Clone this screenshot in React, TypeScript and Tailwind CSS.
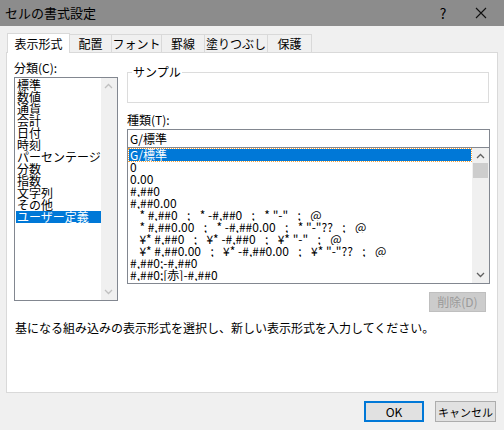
import React from "react";

const cats = ["標準","数値","通貨","会計","日付","時刻","パーセンテージ","分数","指数","文字列","その他","ユーザー定義"];
const types = ["G/標準","0","0.00","#,##0","#,##0.00",
"_ * #,##0_ ;_ * -#,##0_ ;_ * \"-\"_ ;_ @_",
"_ * #,##0.00_ ;_ * -#,##0.00_ ;_ * \"-\"??_ ;_ @_",
"_ ¥* #,##0_ ;_ ¥* -#,##0_ ;_ ¥* \"-\"_ ;_ @_",
"_ ¥* #,##0.00_ ;_ ¥* -#,##0.00_ ;_ ¥* \"-\"??_ ;_ @_",
"#,##0;-#,##0","#,##0;[赤]-#,##0"];

function Up(){return <svg width="9" height="6" viewBox="0 0 9 6"><path d="M1 5L4.5 1.5L8 5" stroke="currentColor" strokeWidth="1.3" fill="none"/></svg>}
function Down(){return <svg width="9" height="6" viewBox="0 0 9 6"><path d="M1 1L4.5 4.5L8 1" stroke="currentColor" strokeWidth="1.3" fill="none"/></svg>}

export default function App(){
  const tabs=[["表示形式",63],["配置",42],["フォント",50],["罫線",43],["塗りつぶし",63],["保護",44]] as const;
  return (
  <div className="w-[504px] h-[430px] bg-[#f0f0f0] flex flex-col text-[12px] leading-[14px] text-black" style={{fontFamily:'"Noto Sans CJK JP","Liberation Sans",sans-serif'}}>
    <div className="h-[26px] bg-[#8c8c8c] flex items-center pl-[5px] text-[13px]">
      <span className="flex-1">セルの書式設定</span>
      <span className="w-[30px] text-center text-[14px]">?</span>
      <span className="w-[46px] flex justify-center"><svg width="12" height="12" viewBox="0 0 12 12"><path d="M1 1L11 11M11 1L1 11" stroke="#111" strokeWidth="1.1"/></svg></span>
    </div>
    <div className="flex pl-[7px] pt-[7px] h-[26px] items-end">
      {tabs.map(([t,w],i)=>(
        <div key={t} style={{width:w}} className={i===0?"h-[20px] mb-[-1px] bg-white border border-b-0 border-[#d9d9d9] flex items-center justify-center relative z-10 whitespace-nowrap":"h-[18px] border border-b-0 border-l-0 border-[#d9d9d9] bg-[#f0f0f0] flex items-center justify-center whitespace-nowrap"}>{t}</div>
      ))}
    </div>
    <div className="mx-[6px] h-[341px] bg-white border border-[#d9d9d9] relative px-[7px] pt-[8px]">
      <div className="flex gap-[9px]">
        <div className="w-[104px]">
          <div className="mb-[2px]">分類(C):</div>
          <div className="h-[224px] border border-[#828790] flex">
            <div className="flex-1 pt-[1px] pl-[1px]">
              {cats.map((c,i)=><div key={c} className={"h-[12px] leading-[12px] overflow-hidden whitespace-nowrap pl-[1px] "+(i===11?"bg-[#0078d7] text-white":"")}>{c}</div>)}
            </div>
            <div className="w-[17px] bg-[#f0f0f0] flex flex-col justify-between items-center py-[5px] text-[#c0c0c0]"><Up/><Down/></div>
          </div>
        </div>
        <div className="flex-1 pt-[5px]">
          <div className="h-[31px] border border-[#dcdcdc] relative mt-[6px] mr-[1px]">
            <span className="absolute -top-[8px] left-[4px] bg-white px-[1px]">サンプル</span>
          </div>
          <div className="mt-[10px] mb-[2px]">種類(T):</div>
          <div className="h-[19px] border border-[#828790] pl-[2px] flex items-center">G/標準</div>
          <div className="h-[136px] border border-[#828790] border-t-0 flex">
            <div className="flex-1 pt-[1px] pl-[1px] overflow-hidden">
              {types.map((c,i)=><div key={i} className={"h-[12px] leading-[12px] overflow-hidden pl-[1px] whitespace-pre "+(i===0?"bg-[#0078d7] text-white outline-1 outline-dotted outline-[#f7a33a] mr-[1px]":"")}>{c}</div>)}
            </div>
            <div className="w-[17px] bg-[#f0f0f0] flex flex-col items-center py-[5px] text-[#606060]">
              <Up/>
              <div className="w-[15px] h-[15px] bg-[#cdcdcd] mt-[4px]"></div>
              <div className="flex-1"></div>
              <Down/>
            </div>
          </div>
          <div className="flex justify-end mt-[8px] mr-[4px]">
            <div className="w-[57px] h-[20px] bg-[#cccccc] border border-[#bfbfbf] text-[#9a9a9a] flex items-center justify-center whitespace-nowrap">削除(D)</div>
          </div>
        </div>
      </div>
      <div className="mt-[9px] ml-[1px] whitespace-nowrap">基になる組み込みの表示形式を選択し、新しい表示形式を入力してください。</div>
    </div>
    <div className="flex justify-end gap-[11px] pr-[8px] pt-[8px]">
      <div className="w-[60px] h-[21px] bg-[#e1e1e1] border-2 border-[#0078d7] flex items-center justify-center">OK</div>
      <div className="w-[61px] h-[21px] bg-[#e1e1e1] border border-[#adadad] flex items-center justify-center whitespace-nowrap text-[11px]">キャンセル</div>
    </div>
  </div>);
}
